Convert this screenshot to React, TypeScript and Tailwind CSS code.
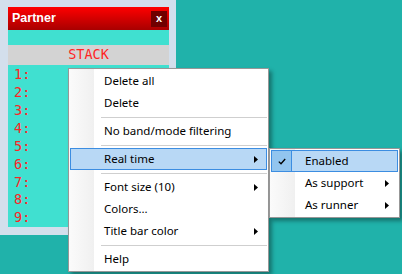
import React from 'react';

const menuFont = { fontFamily: '"Noto Sans", "Liberation Sans", sans-serif' };

const Arrow = () => (
  <svg width="4" height="7" viewBox="0 0 4 7" className="shrink-0">
    <path d="M0 0 L4 3.5 L0 7 Z" fill="#000" />
  </svg>
);

const Separator = () => (
  <div className="h-[6px] flex items-center pl-[31px]">
    <div className="h-px w-full bg-[#cfcfcf]" />
  </div>
);

type ItemProps = { label: string; sub?: boolean; active?: boolean };

const MenuItem: React.FC<ItemProps> = ({ label, sub, active }) => (
  <div
    className={`h-[22px] flex items-center justify-between pl-[33px] pr-[8px] border ${
      active ? 'bg-[#b8d8f5] border-[#3c8de1]' : 'border-transparent'
    }`}
  >
    <span className="text-[11.5px] text-black leading-none">{label}</span>
    {sub && <Arrow />}
  </div>
);

export default function App() {
  const rows = ['1:', '2:', '3:', '4:', '5:', '6:', '7:', '8:', '9:'];

  return (
    <div className="relative w-[402px] h-[274px] bg-[#20b2aa] overflow-hidden">
      {/* Partner window */}
      <div className="w-[176px] h-[235px] bg-[#d3dfec] pl-[8px] pr-[7px] pt-[7px] pb-[8px] flex flex-col">
        <div className="h-[23px] flex items-center justify-between pl-[4px] pr-[2px] bg-[linear-gradient(to_bottom,#ff0000,#a80000)]">
          <span
            className="text-white font-bold text-[12.5px] leading-none"
            style={{ fontFamily: '"Liberation Sans", Arial, sans-serif' }}
          >
            Partner
          </span>
          <div className="w-[16px] h-[16px] bg-[#700000] flex items-center justify-center">
            <span
              className="text-white font-bold text-[11px] leading-none"
              style={{ fontFamily: '"Liberation Sans", Arial, sans-serif' }}
            >
              x
            </span>
          </div>
        </div>
        <div className="h-[15px] bg-[#40e0d0]" />
        <div
          className="h-[20px] bg-[#d3d3d3] flex items-center justify-center text-[13.5px] text-[#ff2424] leading-none"
          style={{ fontFamily: '"DejaVu Sans Mono", monospace' }}
        >
          STACK
        </div>
        <div
          className="h-[162px] bg-[#40e0d0] pt-[1px] pl-[6px] overflow-hidden"
          style={{ fontFamily: '"DejaVu Sans Mono", monospace' }}
        >
          {rows.map((r) => (
            <div key={r} className="h-[17.9px] flex items-center text-[13.5px] text-[#ff2424] leading-none">
              {r}
            </div>
          ))}
        </div>
      </div>

      {/* Context menu */}
      <div
        className="absolute left-[68px] top-[68px] w-[201px] border border-[#979797] p-px shadow-[3px_3px_4px_rgba(0,0,0,0.35)] bg-[linear-gradient(to_right,#fbfbfb_0px,#f0f0f0_25px,#ffffff_25px)]"
        style={menuFont}
      >
        <MenuItem label="Delete all" />
        <MenuItem label="Delete" />
        <Separator />
        <MenuItem label="No band/mode filtering" />
        <Separator />
        <MenuItem label="Real time" sub active />
        <Separator />
        <MenuItem label="Font size (10)" sub />
        <MenuItem label="Colors..." />
        <MenuItem label="Title bar color" sub />
        <Separator />
        <MenuItem label="Help" />
      </div>

      {/* Real time submenu */}
      <div
        className="absolute left-[269px] top-[148px] w-[131px] border border-[#979797] p-px shadow-[3px_3px_4px_rgba(0,0,0,0.35)] bg-[linear-gradient(to_right,#fbfbfb_0px,#f0f0f0_25px,#ffffff_25px)]"
        style={menuFont}
      >
        <div className="relative">
          <MenuItem label="Enabled" active />
          <div className="absolute left-0 top-0 w-[21px] h-[22px] bg-[#92c5ef] border border-[#3c8de1] flex items-center justify-center">
            <svg width="8" height="7" viewBox="0 0 8 7">
              <path d="M0.8 3.6 L3 5.8 L7.2 1" stroke="#000" strokeWidth="1.3" fill="none" />
            </svg>
          </div>
        </div>
        <MenuItem label="As support" sub />
        <MenuItem label="As runner" sub />
      </div>
    </div>
  );
}
